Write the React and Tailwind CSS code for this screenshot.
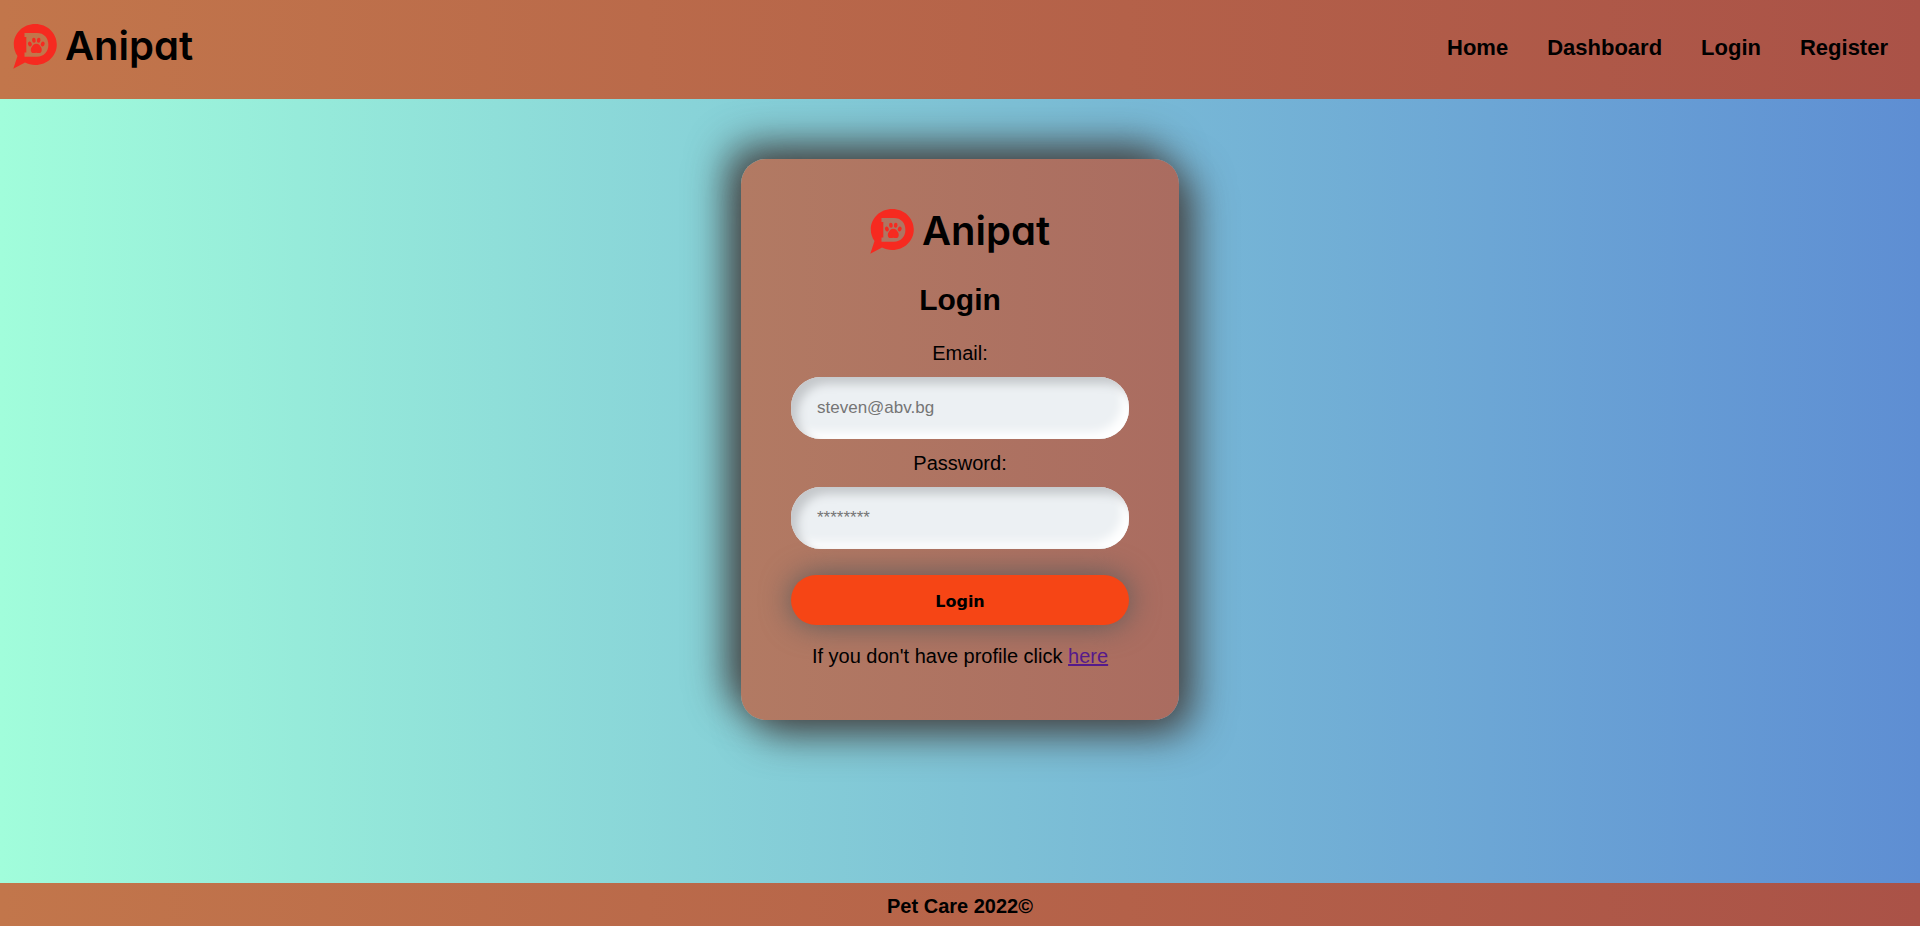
const navLinks = ['Home', 'Dashboard', 'Login', 'Register'];

function Logo() {
  return (
    <a href="#home" aria-label="Anipat" className="inline-flex items-start gap-2">
      <svg viewBox="0 0 44 45" className="h-[45px] w-11" fill="#f62a20" aria-hidden="true">
        <path
          fillRule="evenodd"
          d="M22.2 0C34.2 0 43.8 9 43.8 20.5S34.2 41 22.2 41C18.500 41 15 40.200 12 38.600L0.300 44.800L4.500 32C2.200 28.700 0.800 24.800 0.800 20.500C0.800 9 10.300 0 22.200 0ZM11.500 8.900V13H13.300V28.400H11.500V32.700H24C31 32.700 35.400 27.800 35.400 20.800S31 8.900 24 8.900Z"
        />
        <path d="M23.300 19.800C25.800 19.800 27 21.500 28 23.200C29.300 25.200 29 29.100 26.200 29.100C25.100 29.100 24.300 28.800 23.300 28.800S21.500 29.100 20.400 29.100C17.600 29.100 17.300 25.200 18.600 23.200C19.600 21.500 20.800 19.800 23.300 19.800Z" />
        <ellipse cx="16.900" cy="20" rx="1.900" ry="2.400" transform="rotate(-24 16.900 20)" />
        <ellipse cx="20.900" cy="16.300" rx="1.800" ry="2.500" transform="rotate(-8 20.900 16.300)" />
        <ellipse cx="25.700" cy="16.300" rx="1.800" ry="2.500" transform="rotate(8 25.700 16.300)" />
        <ellipse cx="29.700" cy="20" rx="1.900" ry="2.400" transform="rotate(24 29.700 20)" />
      </svg>
      <span className="font-['Inter',sans-serif] text-[40px] leading-[44px] font-semibold [font-feature-settings:'cv11']">
        Anipat
      </span>
    </a>
  );
}

function Field({ id, label, ...props }) {
  return (
    <div className="flex flex-col items-center gap-3">
      <label htmlFor={id} className="text-xl leading-6">
        {label}
      </label>
      <input
        id={id}
        className="h-[62px] w-full rounded-[30px] bg-[#ecf0f3] px-[26px] text-[17px] text-black shadow-[inset_7px_7px_10px_#c5c8cb,inset_-7px_-7px_10px_#ffffff] outline-none placeholder:text-[#757575]"
        {...props}
      />
    </div>
  );
}

export default function App() {
  return (
    <div className="flex min-h-screen flex-col bg-linear-to-r from-[#a1fddb] via-[#7fc3d6] to-[#5e8ed3] font-['Liberation_Sans',Arial,sans-serif] text-black">
      <header className="flex h-[99px] items-start justify-between bg-linear-to-r from-[#c2764b] to-[#aa5247] pt-6 pr-8 pl-[13px]">
        <Logo />
        <nav className="flex gap-[39px] pt-2 text-[22px] leading-8 font-bold">
          {navLinks.map((name) => (
            <a key={name} href={`#${name.toLowerCase()}`}>
              {name}
            </a>
          ))}
        </nav>
      </header>

      <main className="flex flex-1 flex-col items-center pt-[60px] pb-10">
        <form
          className="flex w-[438px] max-w-full flex-col rounded-[25px] bg-linear-to-r from-[#b27a63] to-[#aa6c60] p-[50px] shadow-[13px_13px_40px_#454545,-13px_-13px_40px_#454545]"
          onSubmit={(e) => e.preventDefault()}
        >
          <div className="flex justify-center">
            <Logo />
          </div>
          <h1 className="mt-[26px] mb-[21px] text-center text-[30px] leading-10 font-bold">Login</h1>
          <div className="flex flex-col gap-3">
            <Field id="email" label="Email:" type="email" placeholder="steven@abv.bg" />
            <Field id="password" label="Password:" type="password" placeholder="********" />
          </div>
          <button
            type="submit"
            className="mt-[26px] h-[50px] w-full rounded-[25px] bg-[#f64515] pt-1 font-['DejaVu_Sans',Verdana,sans-serif] text-base font-bold shadow-[0_0_30px_#5a5a5a]"
          >
            Login
          </button>
          <p className="mt-[17px] text-center text-xl leading-7">
            If you don't have profile click{' '}
            <a href="#register" className="text-[#551a8b] underline">
              here
            </a>
          </p>
        </form>
      </main>

      <footer className="bg-linear-to-r from-[#c2764b] to-[#aa5247] pt-[11px] pb-2 text-center text-xl leading-6 font-bold">
        Pet Care 2022©
      </footer>
    </div>
  );
}
